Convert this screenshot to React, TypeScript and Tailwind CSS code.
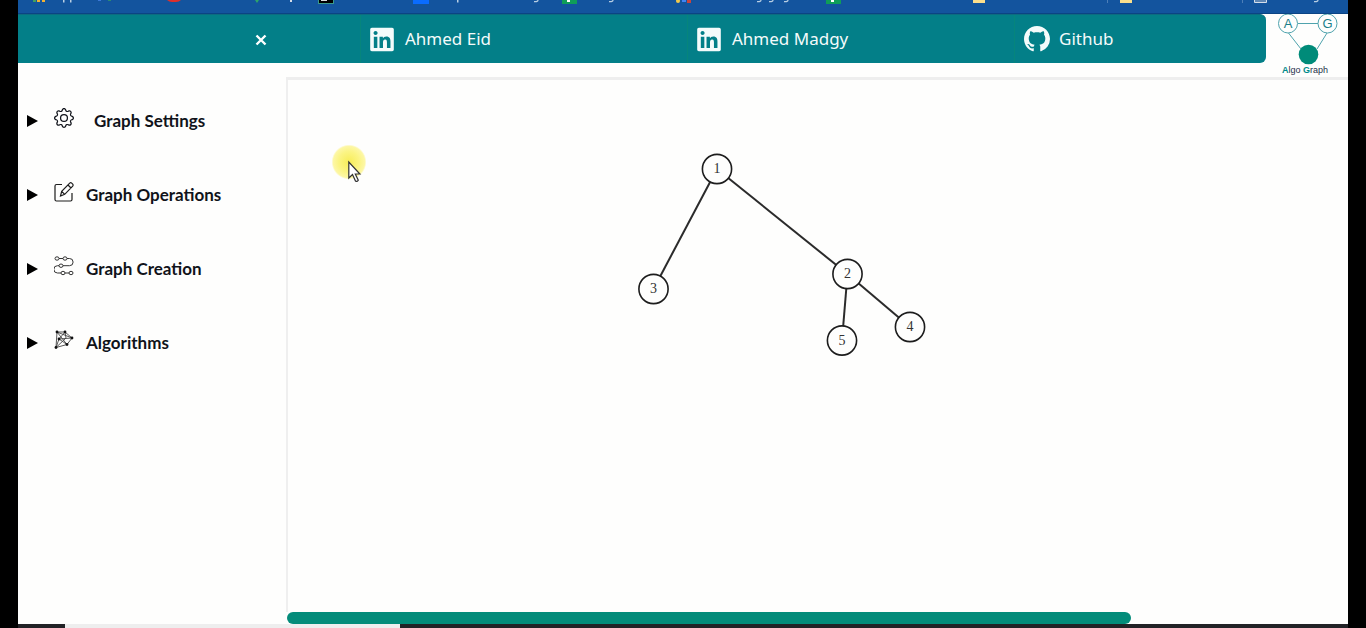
import React from "react";
import { BsGear, BsGithub } from "react-icons/bs";
import { FaLinkedin } from "react-icons/fa";

function BookmarkStrip() {
  const stems = [63, 70, 457];
  const hooks = [535, 610, 758, 770, 785, 1315];
  return (
    <div className="h-[14px] overflow-hidden border-b border-[#0b4484] bg-[#13549e]">
      <svg width="1330" height="13" viewBox="18 0 1330 13" aria-hidden="true">
        <path d="M33 0h3v2h-3z" fill="#3fa060" />
        <path d="M37 0h3v2h-3zM42 0h3v2h-3z" fill="#f2b233" />
        {stems.map((x) => (
          <rect key={x} x={x} y="0" width="1.5" height="2.5" fill="#b9cfe4" />
        ))}
        <rect x="98" y="0" width="3" height="1" fill="#3b78d8" />
        <rect x="108" y="0" width="3" height="1" fill="#2f8a70" />
        <path d="M167 0h14q-2 2-5 2h-4q-3 0-5-2z" fill="#dc2f2c" />
        <path d="M255 0h4l-2 3z" fill="#2fa56a" />
        <rect x="290" y="0" width="2" height="2" fill="#d5deea" />
        <path d="M318 0h16v4h-16z" fill="#3a9a8a" />
        <path d="M319 0h14v3h-14z" fill="#000" />
        <rect x="321" y="0" width="6" height="1" fill="#ddd" />
        <rect x="413" y="0" width="16" height="4" fill="#0a6cff" />
        {hooks.map((x) => (
          <path key={x} d={`M${x + 3} 0q0 2-4 1.6`} fill="none" stroke="#b9cfe4" strokeWidth="1.3" />
        ))}
        {[562, 826].map((x) => (
          <g key={x}>
            <rect x={x} y="0" width="15" height="4" fill="#0f9d58" />
            <rect x={x + 5} y="0" width="3" height="2" fill="#fff" />
          </g>
        ))}
        <circle cx="678" cy="1" r="2" fill="#f2c94c" />
        <rect x="682" y="0" width="4" height="2" fill="#4285f4" />
        <rect x="687" y="0" width="4" height="3" fill="#c9443c" />
        {[973, 1120].map((x) => (
          <rect key={x} x={x} y="0" width="12" height="3" fill="#fbdf8c" />
        ))}
        <rect x="1107" y="0" width="1" height="3" fill="#4d7fb8" />
        <rect x="1242" y="0" width="1" height="3" fill="#4d7fb8" />
        <path d="M1254.5 0v2.500h12V0" fill="#5d86b5" stroke="#d5deea" />
      </svg>
    </div>
  );
}

type NavLinkProps = { icon: React.ReactNode; label: string; last?: boolean };

function NavLink({ icon, label, last }: NavLinkProps) {
  return (
    <a
      href="#"
      className={
        last
          ? "flex min-w-0 flex-1 items-center border-l border-[#06857c] pl-[9px] text-[#f4fbfb]"
          : "flex w-[327px] items-center border-l border-[#06857c] pl-[9px] text-[#f4fbfb]"
      }
    >
      <span className="flex w-[35px] items-center">{icon}</span>
      <span className="font-['Noto_Sans',sans-serif] text-[17px] leading-6">{label}</span>
    </a>
  );
}

function Logo() {
  return (
    <svg className="h-[63px] w-[82px] shrink-0" viewBox="1266 14 82 63" role="img" aria-label="Algo Graph">
      <g fill="none" stroke="#4fa3ad">
        <path d="M1298 23.500h20M1288.500 33l12.500 16M1327 33l-10 16" />
        <circle cx="1288" cy="23.500" r="9.500" />
        <circle cx="1327.500" cy="23.500" r="9.500" />
      </g>
      <circle cx="1308.500" cy="54.500" r="9.800" fill="#008b79" />
      <g className="font-['Liberation_Sans',sans-serif]" textAnchor="middle" fill="#1a7f8a">
        <text x="1288" y="28" fontSize="13">A</text>
        <text x="1327.500" y="28" fontSize="13">G</text>
        <text x="1305" y="73" fontSize="9" fill="#26304a">
          <tspan fill="#008b8b" fontWeight="bold">A</tspan>lgo <tspan fill="#008b8b" fontWeight="bold">G</tspan>raph
        </text>
      </g>
    </svg>
  );
}

function EditIcon() {
  return (
    <svg width="20" height="20" viewBox="0 0 20 20" fill="none" stroke="#1c1c1c" strokeWidth="1.200" aria-hidden="true">
      <path d="M8 2.500H2.500a1.500 1.500 0 0 0-1.500 1.500v13.500A1.500 1.500 0 0 0 2.500 19h14a1.500 1.500 0 0 0 1.500-1.500V11" />
      <path d="M6.500 14l1.200-4.700 8-8.200q1-.8 2 0l1 1q.8 1 0 2l-8 8.200zM7.700 9.300l3 3M14 3l3 3" />
    </svg>
  );
}

function FlowIcon() {
  return (
    <svg width="20" height="20" viewBox="0 0 20 20" fill="none" stroke="#333" strokeWidth="1" aria-hidden="true">
      <path d="M5 2.500h4M13 2.500h2.500a3.500 3.500 0 0 1 0 7.200H9M5 9.700H3.500a3.500 3.500 0 0 0 0 7.300H7M11 17h4" />
      <ellipse cx="3" cy="2.500" rx="2" ry="1.700" />
      <ellipse cx="11" cy="2.500" rx="2" ry="1.700" />
      <ellipse cx="7" cy="9.700" rx="2" ry="1.700" />
      <ellipse cx="9" cy="17" rx="2" ry="1.700" />
      <ellipse cx="17" cy="17" rx="2" ry="1.700" />
    </svg>
  );
}

function NetworkIcon() {
  const dots = [[3, 2], [11, 2], [18, 8], [13, 14.5], [2, 17.5], [5, 9]];
  return (
    <svg width="20" height="20" viewBox="0 0 20 20" aria-hidden="true">
      <path
        d="M3 2h8l7 6-5 6.500-11 3L3 2l15 6M3 2l10 12.500M11 2l1 6-10 9.500M11 2L5 9l8 5.500M5 9l13-1M5 9l-3 8.500"
        fill="none"
        stroke="#444"
        strokeWidth="0.900"
      />
      {dots.map(([x, y]) => (
        <circle key={`${x}-${y}`} cx={x} cy={y} r="1.400" fill="#111" />
      ))}
    </svg>
  );
}

type MenuItemProps = { icon: React.ReactNode; label: string; wide?: boolean };

function MenuItem({ icon, label, wide }: MenuItemProps) {
  return (
    <button type="button" className="flex h-[74px] w-full items-center pl-[9px] text-left text-[#10131a]">
      <svg className="w-[27px] shrink-0" height="12" viewBox="0 0 27 12" aria-hidden="true">
        <path d="M0 0l11 6L0 12z" fill="#000" />
      </svg>
      <span className={wide ? "w-[40px] shrink-0 pb-[6px]" : "w-[32px] shrink-0 pb-[6px]"}>{icon}</span>
      <span className="font-[Lato,sans-serif] text-[17px] leading-6 font-bold">{label}</span>
    </button>
  );
}

const nodes = [
  { id: 1, x: 717, y: 169 },
  { id: 2, x: 847.5, y: 274 },
  { id: 3, x: 653.5, y: 289 },
  { id: 4, x: 910, y: 327 },
  { id: 5, x: 842, y: 340.5 },
];

const edges = [[1, 3], [1, 2], [2, 5], [2, 4]];

function GraphCanvas() {
  const at = (id: number) => nodes[id - 1];
  return (
    <svg className="block" width="1060" height="532" viewBox="288 80 1060 532" role="img" aria-label="Graph">
      <g stroke="#2b2b2b" strokeWidth="2">
        {edges.map(([a, b]) => (
          <line key={`${a}-${b}`} x1={at(a).x} y1={at(a).y} x2={at(b).x} y2={at(b).y} />
        ))}
      </g>
      {nodes.map((n) => (
        <g key={n.id}>
          <circle cx={n.x} cy={n.y} r="14.600" fill="#fefefd" stroke="#1d1d1d" strokeWidth="1.600" />
          <text
            x={n.x}
            y={n.y + 4}
            textAnchor="middle"
            fontSize="14"
            fill="#333"
            className="font-['Liberation_Serif',serif]"
          >
            {n.id}
          </text>
        </g>
      ))}
    </svg>
  );
}

function Pointer() {
  return (
    <svg className="absolute top-[64px] left-[45px]" width="40" height="42" viewBox="331 144 40 42" aria-hidden="true">
      <defs>
        <radialGradient id="glow">
          <stop offset="0" stopColor="#f7ed58" />
          <stop offset="0.600" stopColor="#fbf484" />
          <stop offset="0.900" stopColor="#fdf7a5" />
          <stop offset="1" stopColor="#fdf7a5" stopOpacity="0" />
        </radialGradient>
      </defs>
      <circle cx="349" cy="162" r="17.500" fill="url(#glow)" />
      <path d="M348.800 162v16l3.700-3.500 3 6.500q1.500 1.200 2.800-.8l-3-6.200h4.600z" fill="#fff" stroke="#333" strokeWidth="1.200" />
    </svg>
  );
}

export default function App() {
  return (
    <div className="flex min-h-screen flex-col bg-black px-[18px]">
      <BookmarkStrip />
      <header className="flex items-start bg-[#fefefd]">
        <nav className="flex h-[49px] min-w-0 flex-1 overflow-hidden rounded-r-md border-t border-[#0d6c80] bg-[#037f88]">
          <div className="flex w-[342px] items-center justify-end pt-[2px] pr-[91px]">
            <button type="button" aria-label="Close menu" className="flex h-6 w-4 items-center justify-center text-white">
              <svg width="12" height="12" viewBox="0 0 12 12" aria-hidden="true">
                <path d="M1.500 1.500l9 9M10.500 1.500l-9 9" stroke="currentColor" strokeWidth="2.400" />
              </svg>
            </button>
          </div>
          <NavLink icon={<FaLinkedin className="h-[27px] w-[24px]" />} label="Ahmed Eid" />
          <NavLink icon={<FaLinkedin className="h-[27px] w-[24px]" />} label="Ahmed Madgy" />
          <NavLink icon={<BsGithub className="h-[26px] w-[26px]" />} label="Github" last />
        </nav>
        <Logo />
      </header>
      <main className="flex flex-1 bg-[#fefefd]">
        <aside className="w-[268px] shrink-0 pt-[7px]">
          <MenuItem icon={<BsGear className="h-5 w-5" />} label="Graph Settings" wide />
          <MenuItem icon={<EditIcon />} label="Graph Operations" />
          <MenuItem icon={<FlowIcon />} label="Graph Creation" />
          <MenuItem icon={<NetworkIcon />} label="Algorithms" />
        </aside>
        <section className="relative flex min-w-0 flex-1 flex-col justify-between overflow-hidden border-t-[3px] border-[#eeeeee]">
          <div className="flex-1 border-l-2 border-[#efefef]">
            <GraphCanvas />
          </div>
          <div className="ml-px h-[12px] w-[844px] rounded-full bg-[#048c7a]" />
          <Pointer />
        </section>
      </main>
      <footer className="flex h-[4px] bg-[#222226]">
        <div className="ml-[47px] w-[335px] bg-[#eeeeee]" />
      </footer>
    </div>
  );
}
